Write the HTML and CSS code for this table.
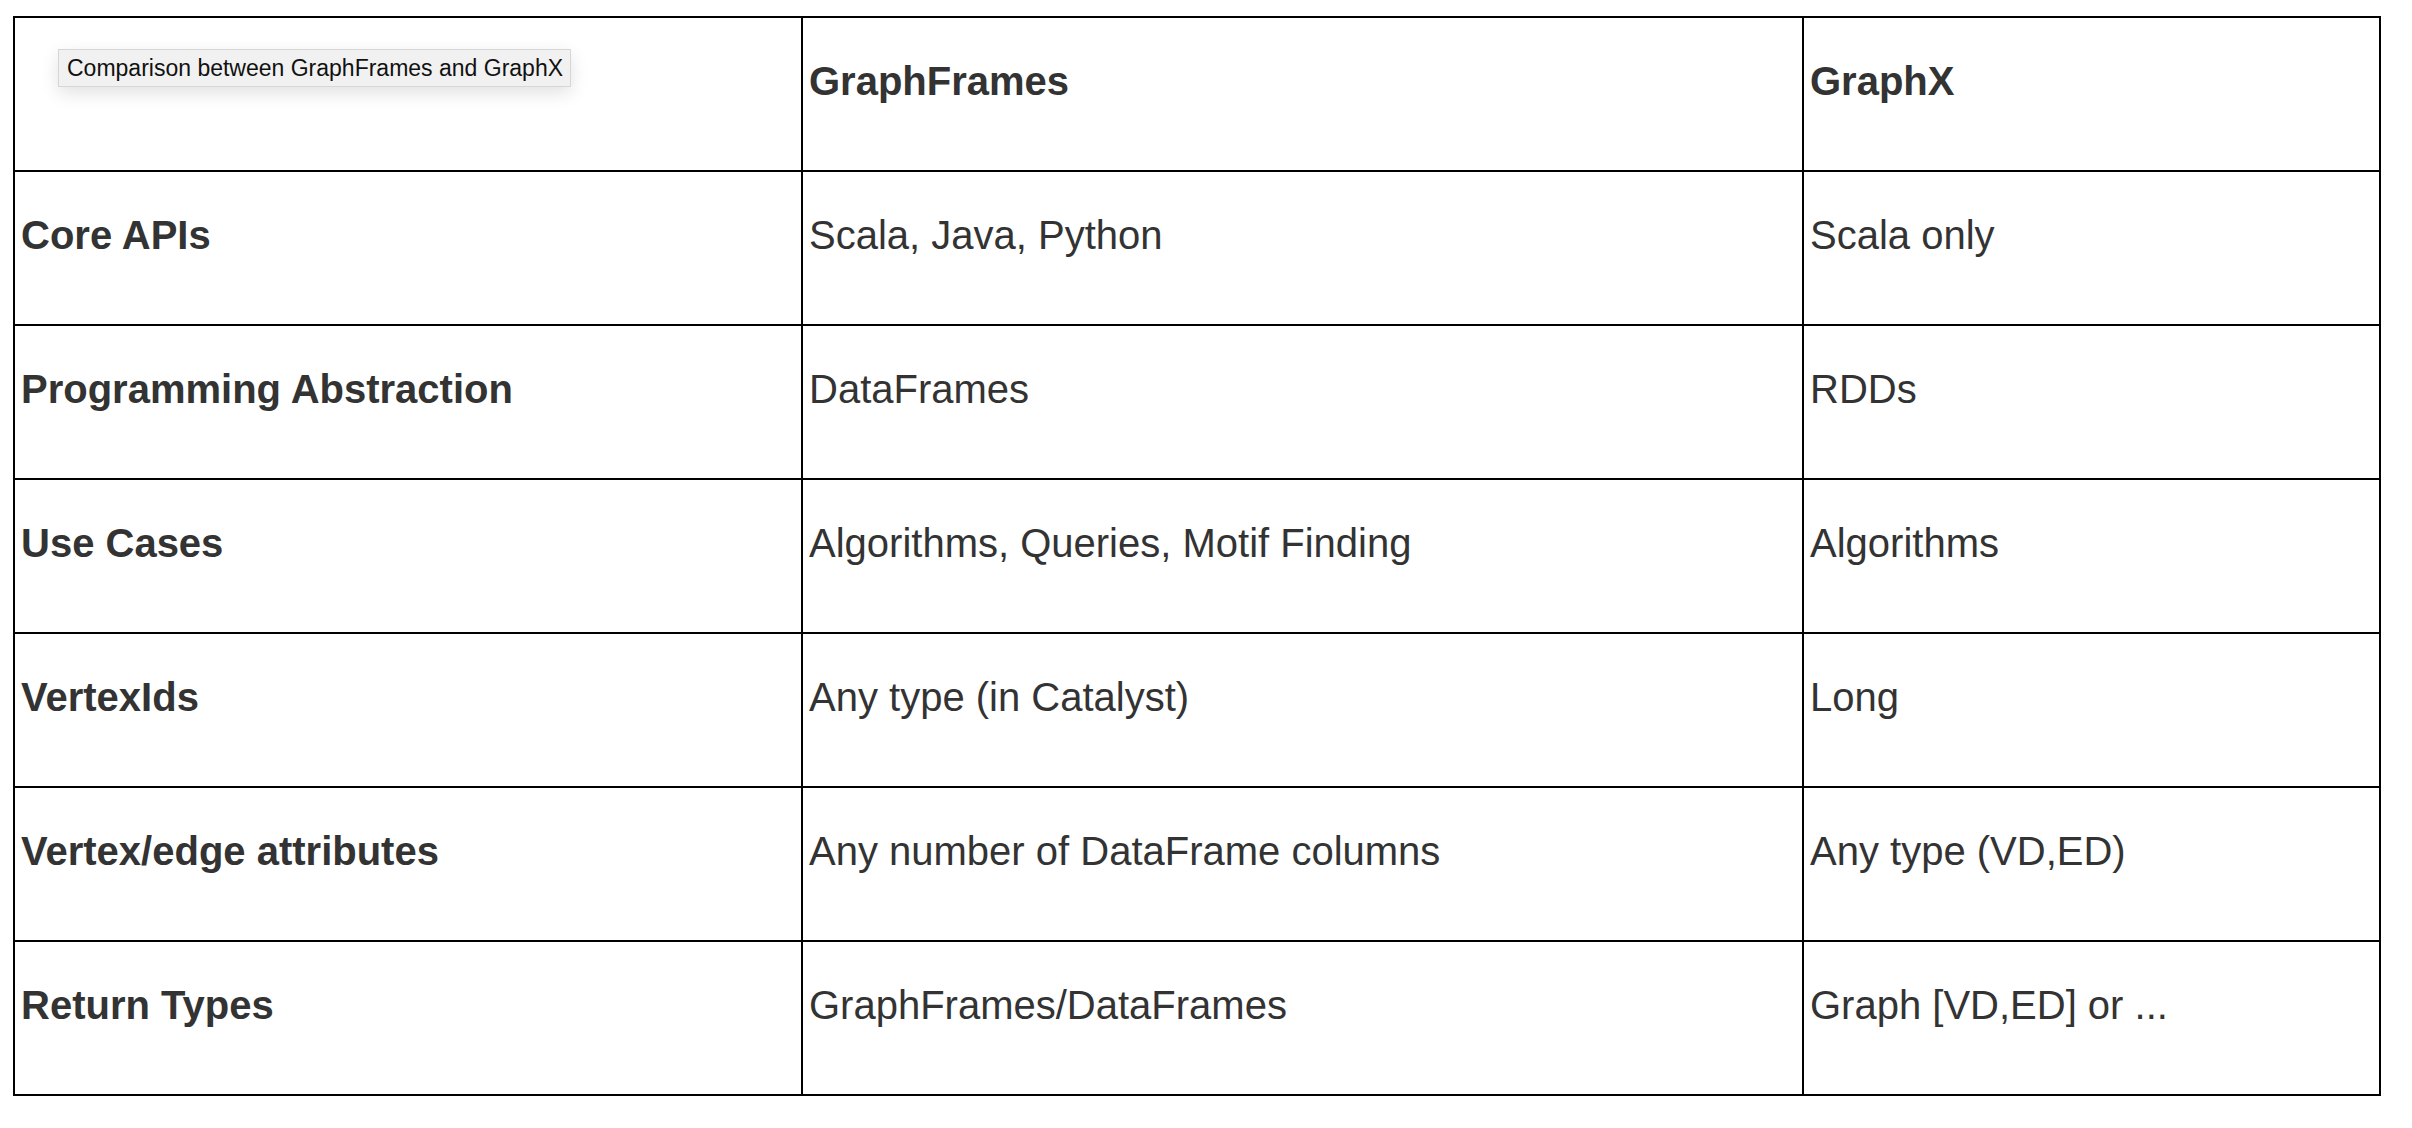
FILE: index.html
```html
<!DOCTYPE html>
<html>
<head>
<meta charset="utf-8">
<link rel="stylesheet" href="styles.css">
</head>
<body>
<div class="wrap">
  <table class="cmp">
    <colgroup>
      <col class="c1">
      <col class="c2">
      <col class="c3">
    </colgroup>
    <tr>
      <th></th>
      <th>GraphFrames</th>
      <th>GraphX</th>
    </tr>
    <tr>
      <th>Core APIs</th>
      <td>Scala, Java, Python</td>
      <td>Scala only</td>
    </tr>
    <tr>
      <th>Programming Abstraction</th>
      <td>DataFrames</td>
      <td>RDDs</td>
    </tr>
    <tr>
      <th>Use Cases</th>
      <td>Algorithms, Queries, Motif Finding</td>
      <td>Algorithms</td>
    </tr>
    <tr>
      <th>VertexIds</th>
      <td>Any type (in Catalyst)</td>
      <td>Long</td>
    </tr>
    <tr>
      <th>Vertex/edge attributes</th>
      <td>Any number of DataFrame columns</td>
      <td>Any type (VD,ED)</td>
    </tr>
    <tr>
      <th>Return Types</th>
      <td>GraphFrames/DataFrames</td>
      <td>Graph [VD,ED] or ...</td>
    </tr>
  </table>
  <div class="tooltip">Comparison between GraphFrames and GraphX</div>
</div>
</body>
</html>
```
FILE: styles.css
```css
html, body {
  margin: 0;
  padding: 0;
  background: #ffffff;
}
.wrap {
  position: relative;
  padding: 16px 0 0 13px;
}
.cmp {
  border-collapse: collapse;
  table-layout: fixed;
  width: 2366px;
  font-family: "Liberation Sans", Arial, Helvetica, sans-serif;
  font-size: 40px;
  color: #333333;
}
.c1 { width: 788px; }
.c2 { width: 1001px; }
.c3 { width: 577px; }
.cmp th, .cmp td {
  border: 2px solid #000000;
  padding: 40px 6px 66px 6px;
  line-height: 46px;
  height: 46px;
  text-align: left;
  vertical-align: top;
  white-space: nowrap;
}
.cmp th { font-weight: bold; }
.cmp td { font-weight: normal; }
.tooltip {
  position: absolute;
  left: 58px;
  top: 49px;
  width: 495px;
  height: 36px;
  padding: 0 8px;
  box-sizing: content-box;
  background: #f1f1f1;
  border: 1px solid #d6d6d6;
  box-shadow: 0 6px 18px rgba(0, 0, 0, 0.12);
  font-family: "Liberation Sans", Arial, Helvetica, sans-serif;
  font-size: 23px;
  line-height: 36px;
  color: #111111;
  white-space: nowrap;
}
```
